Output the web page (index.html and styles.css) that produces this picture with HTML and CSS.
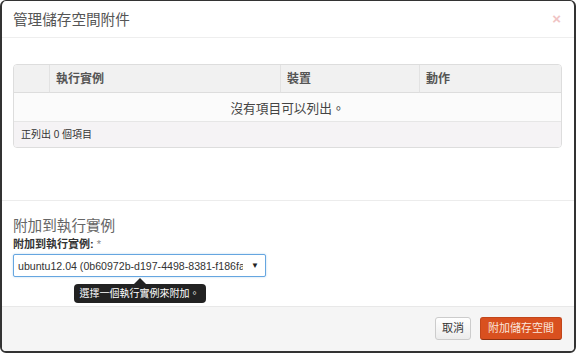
FILE: index.html
```html
<!DOCTYPE html>
<html lang="zh-Hant">
<head>
<meta charset="utf-8">
<title>管理儲存空間附件</title>
<link rel="stylesheet" href="styles.css">
</head>
<body>
<div class="modal">
  <div class="modal-header">
    <h3 class="modal-title">管理儲存空間附件</h3>
    <span class="close">×</span>
  </div>
  <div class="modal-body">
    <div class="table-wrap">
      <table class="data-table">
        <colgroup>
          <col class="c1"><col class="c2"><col class="c3"><col class="c4">
        </colgroup>
        <thead>
          <tr><th></th><th>執行實例</th><th>裝置</th><th>動作</th></tr>
        </thead>
        <tbody>
          <tr class="empty"><td colspan="4">沒有項目可以列出。</td></tr>
        </tbody>
        <tfoot>
          <tr><td colspan="4">正列出 0 個項目</td></tr>
        </tfoot>
      </table>
    </div>
  </div>
  <div class="attach">
    <h4 class="attach-title">附加到執行實例</h4>
    <label class="field-label">附加到執行實例: <span class="req">*</span></label>
    <div class="select-wrap">
      <div class="select">
        <span class="select-text">ubuntu12.04 (0b60972b-d197-4498-8381-f186fa8</span>
        <span class="arrow">▼</span>
      </div>
      <div class="tooltip">選擇一個執行實例來附加。</div>
    </div>
  </div>
  <div class="modal-footer">
    <button class="btn btn-cancel">取消</button>
    <button class="btn btn-primary">附加儲存空間</button>
  </div>
</div>
</body>
</html>
```

FILE: styles.css
```css
* { box-sizing: border-box; }
html, body { margin: 0; padding: 0; background: #ffffff; }
body {
  font-family: "Liberation Sans", "Noto Sans CJK TC", Arial, sans-serif;
  color: #333;
  width: 576px;
  height: 353px;
  overflow: hidden;
}
.modal {
  width: 576px;
  height: 353px;
  border: 2px solid #333;
  border-top-width: 1px;
  border-radius: 6px;
  background: #fff;
  display: flex;
  flex-direction: column;
  overflow: hidden;
}
.modal-header {
  height: 37px;
  border-bottom: 1px solid #eeeeee;
  display: flex;
  align-items: center;
  justify-content: space-between;
  padding: 0 12px 0 11px;
  flex: none;
}
.modal-title {
  margin: 0;
  font-size: 14.6px;
  font-weight: normal;
  line-height: 18px;
  color: #555;
  padding-top: 1px;
}
.close {
  font-size: 15px;
  font-weight: bold;
  color: #f0c4c4;
  line-height: 16px;
  margin-right: 1px;
}
.modal-body {
  height: 163px;
  padding: 26px 12px 0 11px;
  border-bottom: 1px solid #ececec;
  flex: none;
}
.table-wrap {
  border: 1px solid #dddddd;
  border-radius: 4px;
  overflow: hidden;
}
.data-table {
  width: 100%;
  border-collapse: separate;
  border-spacing: 0;
  table-layout: fixed;
}
.c1 { width: 35px; }
.c2 { width: 231px; }
.c3 { width: 139px; }
.data-table th {
  height: 28px;
  background: #f1f1f1;
  border-bottom: 1px solid #dddddd;
  border-left: 1px solid #e2e2e2;
  text-align: left;
  font-size: 12px;
  font-weight: bold;
  color: #555;
  padding: 0 6px;
  line-height: 14px;
}
.data-table th:first-child { border-left: none; }
.empty td {
  height: 28px;
  background: #fbfbfb;
  text-align: center;
  font-size: 12.7px;
  color: #444;
  line-height: 16px;
  padding: 4px 0 0;
}
.data-table tfoot td {
  height: 26px;
  background: #f5f3f5;
  border-top: 1px solid #e6e6e6;
  font-size: 10px;
  color: #333;
  padding: 0 7px;
  line-height: 12px;
}
.attach {
  height: 105px;
  padding: 16px 12px 0 11px;
  flex: none;
  display: flex;
  flex-direction: column;
  align-items: flex-start;
}
.attach-title {
  margin: 0;
  font-size: 14.6px;
  font-weight: normal;
  line-height: 18px;
  color: #666;
}
.field-label {
  font-size: 11px;
  font-weight: bold;
  color: #333;
  line-height: 12px;
  margin-top: 3px;
}
.req { color: #888; font-weight: normal; }
.select-wrap {
  margin-top: 4px;
  display: flex;
  flex-direction: column;
  align-items: center;
}
.select {
  width: 253px;
  height: 23px;
  border: 1px solid #66a6e0;
  border-radius: 2px;
  box-shadow: 0 0 2px rgba(102, 166, 224, 0.5);
  display: flex;
  align-items: center;
  padding: 0 6px 0 4px;
  background: #fff;
}
.select-text {
  flex: 1;
  min-width: 0;
  overflow: hidden;
  white-space: nowrap;
  font-size: 10.6px;
  color: #333;
  line-height: 14px;
}
.arrow {
  font-size: 8px;
  color: #222;
  margin-left: 8px;
  line-height: 10px;
  flex: none;
}
.tooltip {
  position: relative;
  margin-top: 7px;
  background: #222;
  color: #fff;
  font-size: 10px;
  line-height: 13px;
  padding: 3px 6px 3px;
  border-radius: 4px;
  white-space: nowrap;
}
.tooltip::before {
  content: "";
  position: absolute;
  top: -6px;
  left: 50%;
  margin-left: -6px;
  border-left: 6px solid transparent;
  border-right: 6px solid transparent;
  border-bottom: 6px solid #222;
}
.modal-footer {
  flex: 1;
  background: #f5f5f5;
  border-top: 1px solid #e8e8e8;
  display: flex;
  justify-content: flex-end;
  align-items: flex-start;
  padding: 10px 12px 0 11px;
  gap: 9px;
}
.btn {
  font-family: "Liberation Sans", "Noto Sans CJK TC", Arial, sans-serif;
  height: 23px;
  border-radius: 3px;
  font-size: 11px;
  line-height: 13px;
  padding: 0 6px;
  cursor: pointer;
}
.btn-cancel {
  background: linear-gradient(#ffffff, #ececec);
  border: 1px solid #cccccc;
  color: #333;
}
.btn-primary {
  background: #d9501f;
  border: 1px solid #c2461a;
  border-bottom-color: #8f3312;
  color: #fbe6dc;
  font-size: 11px;
  padding: 0 7px;
}
```
